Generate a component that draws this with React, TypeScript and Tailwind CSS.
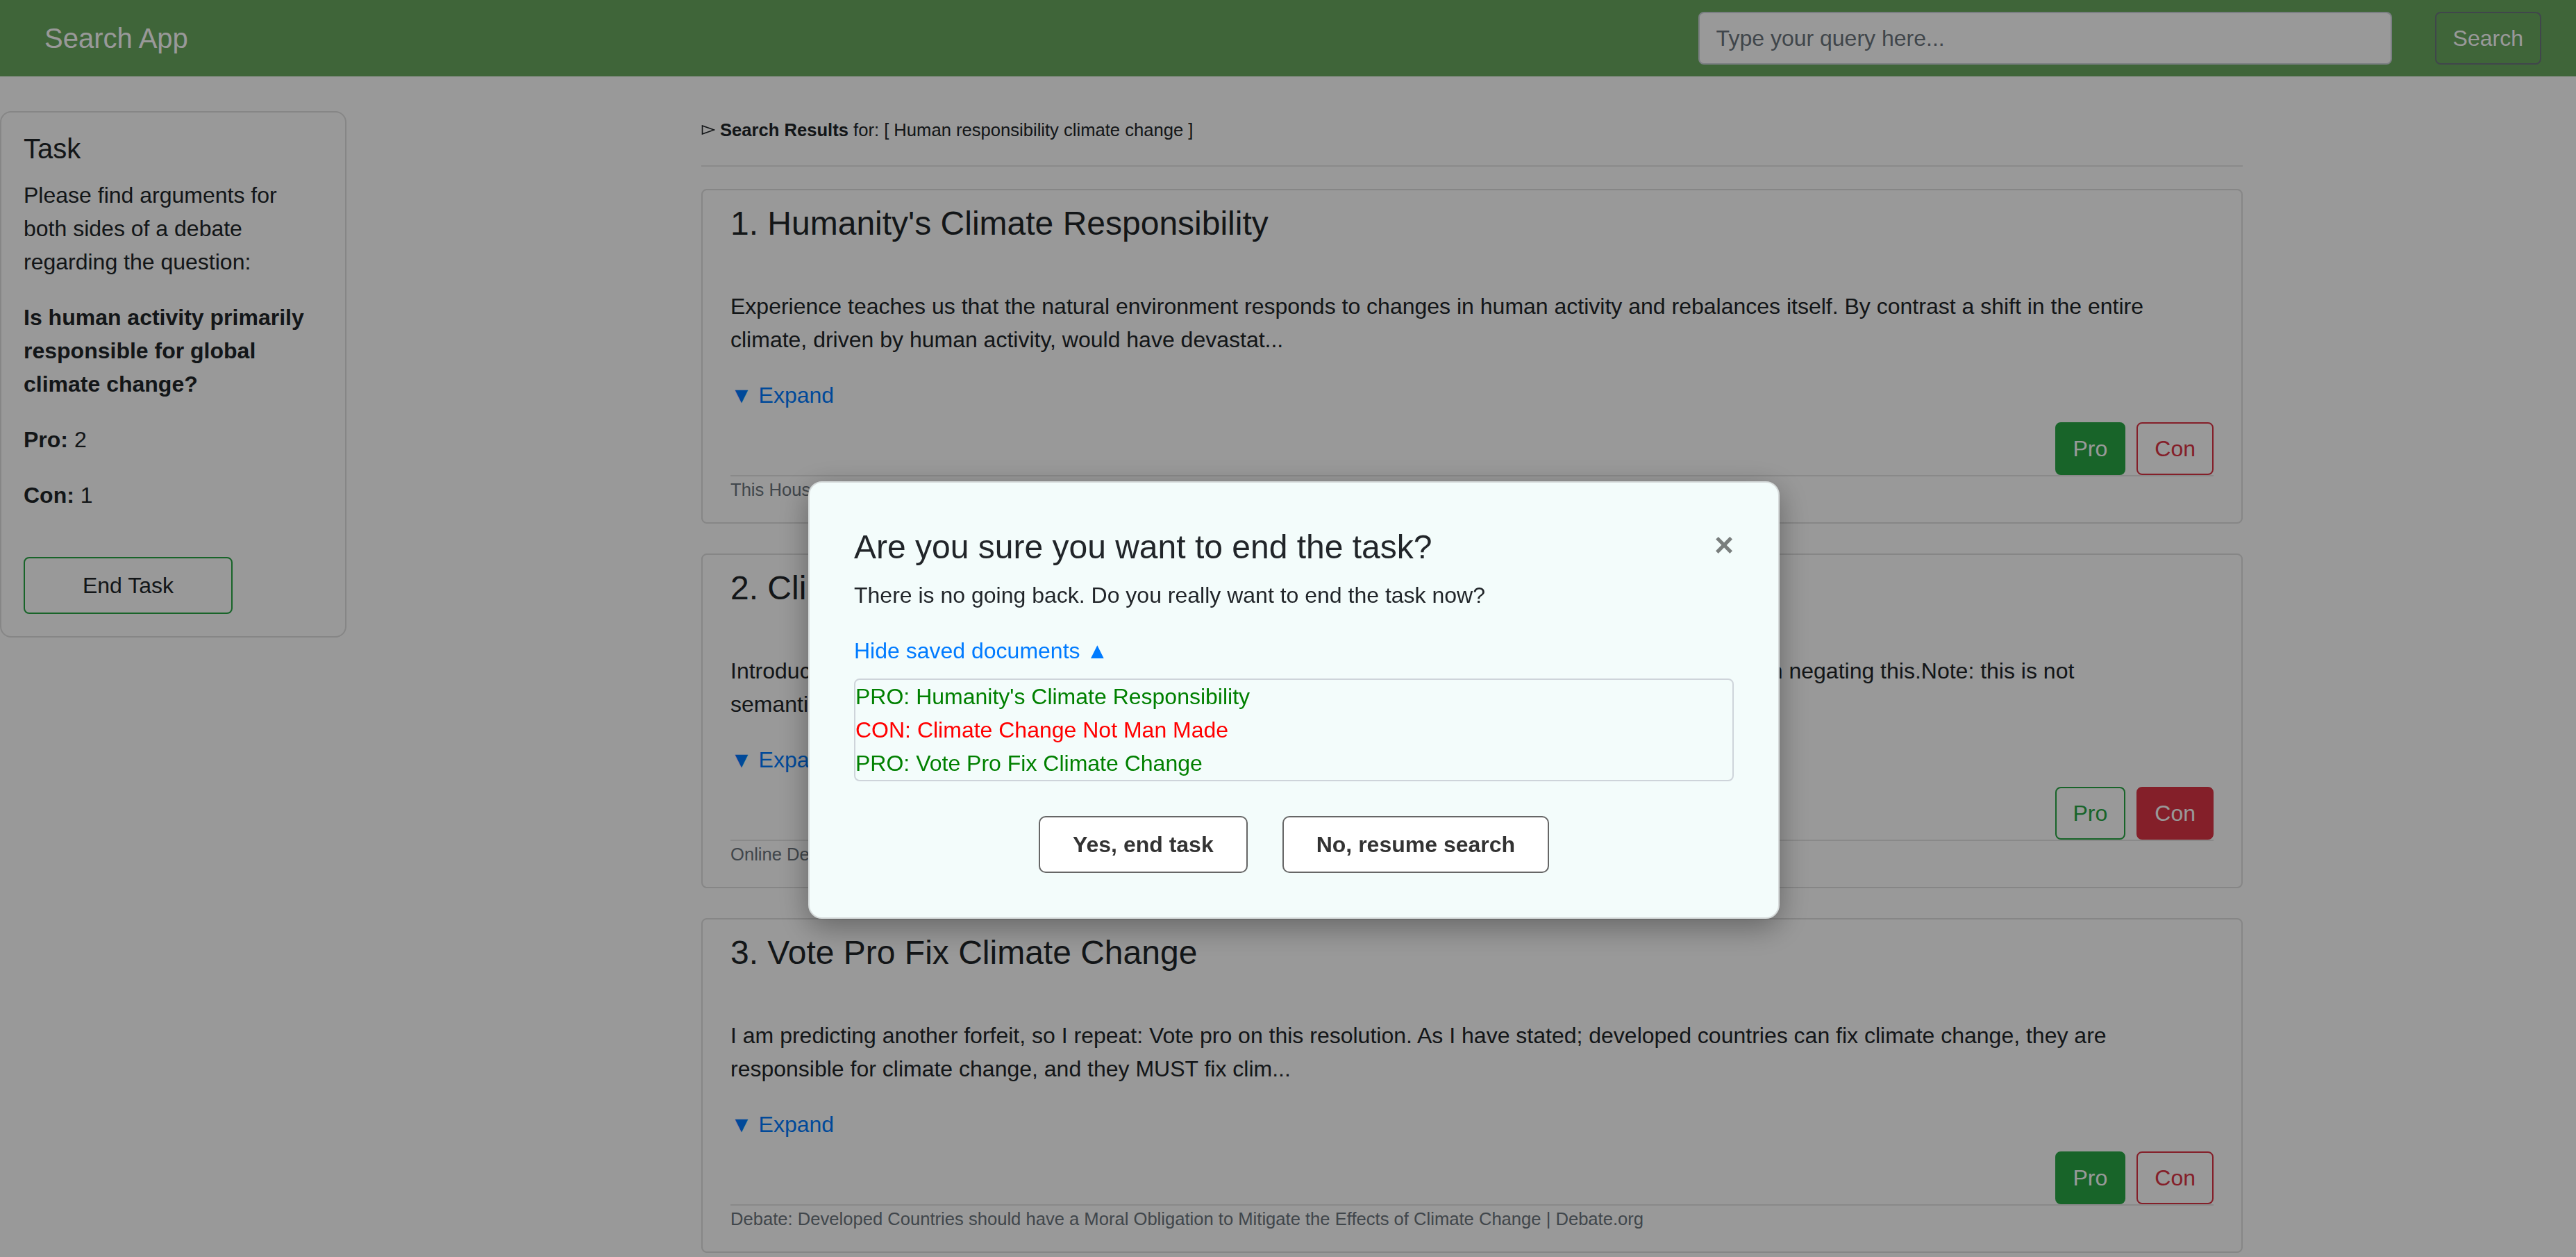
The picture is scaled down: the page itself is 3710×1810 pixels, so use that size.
import React from "react";

type Side = "pro" | "con";

type Result = {
  title: string;
  snippet: string;
  source: string;
  saved: Side;
};

const results: Result[] = [
  {
    title: "1. Humanity's Climate Responsibility",
    snippet:
      "Experience teaches us that the natural environment responds to changes in human activity and rebalances itself. By contrast a shift in the entire climate, driven by human activity, would have devastat...",
    source:
      "This House believes that humanity is responsible for climate change | idebate.org",
    saved: "pro",
  },
  {
    title: "2. Climate Change Not Man Made",
    snippet:
      "Introduction: the burden of proof is on Pro to show that climate change is man made and I will be arguing in negating this.Note: this is not semantics, but a debate over the cause of climate change...",
    source: "Online Debate: Climate Change Not Man Made | Debate.org",
    saved: "con",
  },
  {
    title: "3. Vote Pro Fix Climate Change",
    snippet:
      "I am predicting another forfeit, so I repeat: Vote pro on this resolution. As I have stated; developed countries can fix climate change, they are responsible for climate change, and they MUST fix clim...",
    source:
      "Debate: Developed Countries should have a Moral Obligation to Mitigate the Effects of Climate Change | Debate.org",
    saved: "pro",
  },
];

const savedDocs: { side: Side; title: string }[] = [
  { side: "pro", title: "Humanity's Climate Responsibility" },
  { side: "con", title: "Climate Change Not Man Made" },
  { side: "pro", title: "Vote Pro Fix Climate Change" },
];

function VoteButtons({ saved }: { saved: Side }) {
  return (
    <div className="mt-[15px] flex justify-end gap-[16px]">
      <button
        type="button"
        className={
          saved === "pro"
            ? "h-[76px] rounded-[8px] border-2 border-[#28a745] bg-[#28a745] px-[24px] text-[32px] leading-[48px] text-white"
            : "h-[76px] rounded-[8px] border-2 border-[#28a745] bg-transparent px-[24px] text-[32px] leading-[48px] text-[#28a745]"
        }
      >
        Pro
      </button>
      <button
        type="button"
        className={
          saved === "con"
            ? "h-[76px] rounded-[8px] border-2 border-[#dc3545] bg-[#dc3545] px-[24px] text-[32px] leading-[48px] text-white"
            : "h-[76px] rounded-[8px] border-2 border-[#dc3545] bg-transparent px-[24px] text-[32px] leading-[48px] text-[#dc3545]"
        }
      >
        Con
      </button>
    </div>
  );
}

function ResultCard({ result }: { result: Result }) {
  return (
    <div className="rounded-[8px] border-2 border-[#dfdfdf] bg-white px-[40px] pt-[19px] pb-[28px]">
      <h4 className="text-[48px] leading-[57.6px] font-normal">{result.title}</h4>
      <p className="mt-[66px] mr-[48px] text-[32px] leading-[48px]">{result.snippet}</p>
      <p className="mt-[32px] text-[32px] leading-[48px] text-[#007bff]">▼ Expand</p>
      <VoteButtons saved={result.saved} />
      <div className="border-t-2 border-[#e5e5e5]" />
      <p className="text-[25.6px] leading-[38.4px] text-[#6c757d]">{result.source}</p>
    </div>
  );
}

function TaskCard() {
  return (
    <aside className="mt-[50px] w-[499px] shrink-0 self-start rounded-[16px] border-2 border-[#dfdfdf] bg-white px-[32px] pt-[28px] pb-[32px]">
      <h5 className="text-[40px] leading-[48px] font-normal">Task</h5>
      <p className="mt-[19px] text-[32px] leading-[48px]">
        Please find arguments for both sides of a debate regarding the question:
      </p>
      <p className="mt-[32px] text-[32px] leading-[48px] font-bold">
        Is human activity primarily responsible for global climate change?
      </p>
      <p className="mt-[32px] text-[32px] leading-[48px]">
        <b>Pro:</b> 2
      </p>
      <p className="mt-[32px] text-[32px] leading-[48px]">
        <b>Con:</b> 1
      </p>
      <button
        type="button"
        className="mt-[65px] h-[82px] w-[301px] rounded-[8px] border-2 border-[#28a745] bg-transparent text-[32px] leading-[48px] text-[#212529]"
      >
        End Task
      </button>
    </aside>
  );
}

function EndTaskModal() {
  return (
    <>
      <div className="fixed inset-0 bg-black/40" />
      <div className="fixed inset-0 flex items-start justify-center pt-[693px] pl-[17px]">
        <div className="w-[1399px] rounded-[20px] border-2 border-[#d5dada] bg-[#f3fcfb] p-[64px] shadow-[0_12px_44px_rgba(0,0,0,0.35)]">
          <div className="flex items-start justify-between">
            <h4 className="text-[48px] leading-[57.6px] font-normal text-[#212529]">
              Are you sure you want to end the task?
            </h4>
            <button
              type="button"
              className="mt-[2px] text-[48px] leading-[48px] font-bold text-black/50"
              aria-label="Close"
            >
              ×
            </button>
          </div>
          <p className="mt-[16px] text-[32px] leading-[48px] text-[#212529]">
            There is no going back. Do you really want to end the task now?
          </p>
          <p className="mt-[32px] text-[32px] leading-[48px] text-[#007bff]">
            Hide saved documents ▲
          </p>
          <div className="mt-[16px] rounded-[8px] border-2 border-[#ced4da]">
            {savedDocs.map((doc, idx) => (
              <p
                key={`${doc.title}-${idx}`}
                className={
                  doc.side === "pro"
                    ? "text-[32px] leading-[48px] text-[#008000]"
                    : "text-[32px] leading-[48px] text-[#ff0000]"
                }
              >
                {doc.side === "pro" ? "PRO" : "CON"}: {doc.title}
              </p>
            ))}
          </div>
          <div className="mt-[50px] flex justify-center gap-[50px]">
            <button
              type="button"
              className="h-[82px] rounded-[10px] border-2 border-[#666666] bg-white px-[47px] text-[32px] leading-[48px] font-bold text-[#333333]"
            >
              Yes, end task
            </button>
            <button
              type="button"
              className="h-[82px] rounded-[10px] border-2 border-[#666666] bg-white px-[47px] text-[32px] leading-[48px] font-bold text-[#333333]"
            >
              No, resume search
            </button>
          </div>
        </div>
      </div>
    </>
  );
}

export default function App() {
  return (
    <div className="relative h-screen overflow-hidden bg-white font-['Liberation_Sans',Arial,sans-serif] text-[#212529]">
      <nav className="flex h-[110px] items-center bg-[#69a85f] pl-[64px] pr-[50px]">
        <span className="text-[40px] leading-[60px] text-white">Search App</span>
        <div className="ml-auto flex items-center gap-[62px]">
          <input
            type="text"
            placeholder="Type your query here..."
            className="h-[76px] w-[999px] rounded-[8px] border-2 border-[#ced4da] bg-white px-[24px] text-[32px] text-[#495057] outline-none placeholder:text-[#6c757d]"
          />
          <button
            type="button"
            className="h-[76px] rounded-[8px] border-2 border-[#6c757d] bg-transparent px-[24px] text-[32px] leading-[48px] text-white"
          >
            Search
          </button>
        </div>
      </nav>

      <div className="flex">
        <TaskCard />
        <main className="ml-[511px] w-[2220px] shrink-0 pt-[58px]">
          <div className="flex items-center gap-[7px] text-[25.6px] leading-[38.4px]">
            <svg width="20" height="14" viewBox="0 0 20 14" className="shrink-0">
              <polygon
                points="1.5,1 18.5,7 1.5,13"
                fill="none"
                stroke="#212529"
                strokeWidth="1.6"
                strokeLinejoin="miter"
              />
            </svg>
            <span>
              <b>Search Results</b> for: [ Human responsibility climate change ]
            </span>
          </div>
          <div className="mt-[32px] border-t-2 border-[#e6e6e6]" />
          <div className="mt-[32px] flex flex-col gap-[43px] pb-[40px]">
            {results.map((result, idx) => (
              <ResultCard key={`${result.title}-${idx}`} result={result} />
            ))}
          </div>
        </main>
      </div>

      <EndTaskModal />
    </div>
  );
}
